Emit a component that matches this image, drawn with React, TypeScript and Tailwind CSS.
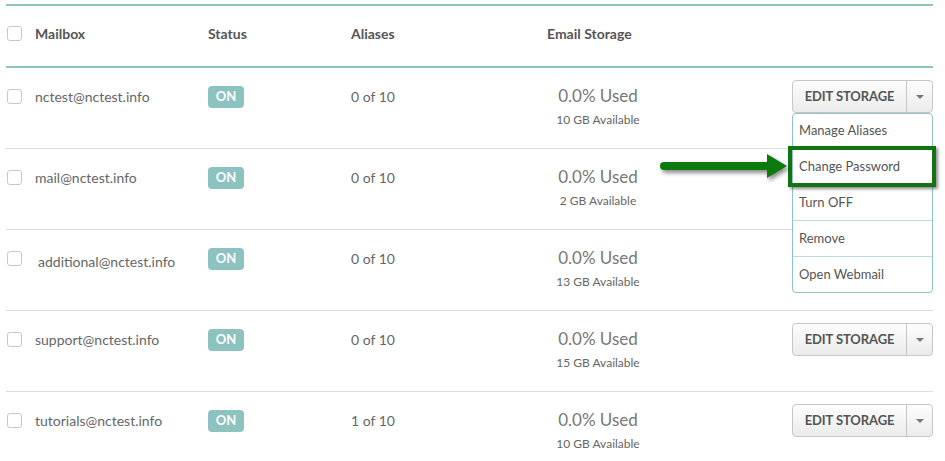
import React from 'react';

/* ─── Data ─────────────────────────────────────────────── */

type Mailbox = {
  email: string;
  aliases: string;
  available: string;
  nudge?: boolean;
  covered?: boolean;
};

const MAILBOXES: Mailbox[] = [
  { email: 'nctest@nctest.info',     aliases: '0 of 10', available: '10 GB Available' },
  { email: 'mail@nctest.info',       aliases: '0 of 10', available: '2 GB Available', covered: true },
  { email: 'additional@nctest.info', aliases: '0 of 10', available: '13 GB Available', nudge: true, covered: true },
  { email: 'support@nctest.info',    aliases: '0 of 10', available: '15 GB Available' },
  { email: 'tutorials@nctest.info',  aliases: '1 of 10', available: '10 GB Available' },
];

const MENU = ['Manage Aliases', 'Change Password', 'Turn OFF', 'Remove', 'Open Webmail'];

/* ─── Pieces ───────────────────────────────────────────── */

function Checkbox() {
  return <span className="block w-[15px] h-[15px] rounded-[3px] border border-[#c9c9c9] bg-white" />;
}

function Dropdown() {
  return (
    <div className="absolute left-0 right-0 top-[33px] z-10 bg-white border border-[#8ec4c1] rounded-[4px]">
      {MENU.map((label, i) => (
        <div
          key={label}
          className={`flex items-center pl-[6px] text-[13px] text-[#555] ${i > 0 ? 'h-[36px] border-t border-[#bcdcd9]' : 'h-[34px]'}`}
        >
          {label}
        </div>
      ))}
      {/* highlight around Change Password */}
      <div className="absolute left-[-5px] top-[32px] w-[148px] h-[41px] border-4 border-[#137313] shadow-[2px_2px_3px_rgba(0,0,0,0.45)]" />
    </div>
  );
}

function EditStorage({ open }: { open?: boolean }) {
  return (
    <div className="relative">
      <div className="flex h-[33px] w-[141px] rounded-[4px] border border-[#c6c6c6] bg-gradient-to-b from-[#fdfdfd] to-[#ebebeb] text-[#555]">
        <div className="w-[113px] flex items-center justify-center text-[13px] font-bold tracking-[-0.1px]">
          EDIT STORAGE
        </div>
        <div className="flex-1 border-l border-[#c6c6c6] flex items-center justify-center">
          <span className="block w-0 h-0 border-l-[4px] border-r-[4px] border-t-[4px] border-l-transparent border-r-transparent border-t-[#777]" />
        </div>
      </div>
      {open && <Dropdown />}
    </div>
  );
}

/* ─── Page ─────────────────────────────────────────────── */

export default function App() {
  return (
    <div className="relative w-[945px] h-[461px] overflow-hidden bg-white font-['Lato','Open_Sans',sans-serif]">
      <div className="ml-[6px] mt-[4px] w-[927px]">
        {/* Header */}
        <div className="h-[64px] border-t-2 border-b-2 border-[#8ec4c1] flex items-center pb-[5px] text-[14px] font-bold text-[#555]">
          <div className="w-[29px] pl-[1px]"><Checkbox /></div>
          <div className="w-[173px]">Mailbox</div>
          <div className="w-[143px]">Status</div>
          <div className="w-[196px]">Aliases</div>
          <div>Email Storage</div>
        </div>

        {/* Rows */}
        {MAILBOXES.map((m, i) => (
          <div key={m.email} className="h-[81px] border-b border-[#dddddd] flex items-start">
            <div className="w-[29px] pl-[1px] mt-[21px]"><Checkbox /></div>
            <div className={`w-[173px] text-[14px] leading-5 text-[#666] ${m.nudge ? 'mt-[22px] pl-[3px]' : 'mt-[19px]'}`}>
              {m.email}
            </div>
            <div className="w-[143px] mt-[18px]">
              <span className="flex w-[36px] h-[22px] items-center justify-center rounded-[4px] bg-[#8cc3c0] text-white text-[13px] font-bold">
                ON
              </span>
            </div>
            <div className="w-[169px] mt-[19px] text-[14px] leading-5 text-[#666]">{m.aliases}</div>
            <div className="w-[156px] mt-[17px] text-center">
              <div className="text-[17px] leading-[22px] text-[#777]">0.0% Used</div>
              <div className="mt-[5px] text-[12px] leading-4 text-[#666]">{m.available}</div>
            </div>
            <div className="flex-1 flex justify-end mt-[12px]">
              {!m.covered && <EditStorage open={i === 0} />}
            </div>
          </div>
        ))}
      </div>

      {/* Pointer arrow */}
      <svg
        className="absolute left-[655px] top-[148px] z-20 drop-shadow-[2px_3px_2px_rgba(0,0,0,0.45)]"
        width="140"
        height="36"
        viewBox="0 0 140 36"
      >
        <line x1="9" y1="18" x2="116" y2="18" stroke="#0c7a0c" strokeWidth="8" strokeLinecap="round" />
        <polygon points="112,6 132,18 112,30" fill="#0c7a0c" />
      </svg>
    </div>
  );
}
